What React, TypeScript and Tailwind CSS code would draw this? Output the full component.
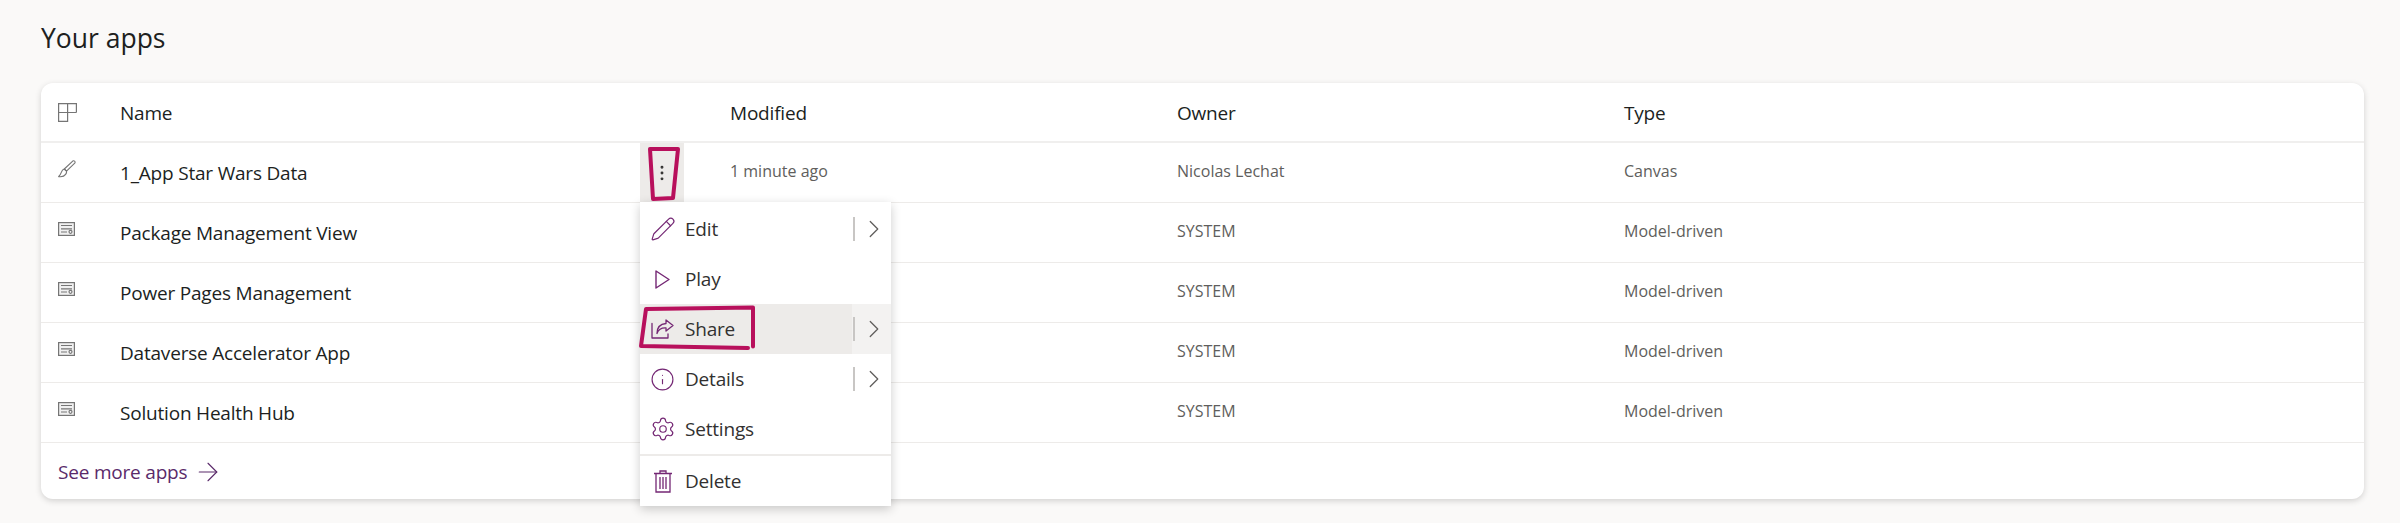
import { ArrowRight, ChevronRight, Info, Pencil, Settings, MoreVertical } from "lucide-react";
import type { ReactNode } from "react";

const APPS = [
  { name: "1_App Star Wars Data", modified: "1 minute ago", owner: "Nicolas Lechat", type: "Canvas", canvas: true },
  { name: "Package Management View", modified: "", owner: "SYSTEM", type: "Model-driven", canvas: false },
  { name: "Power Pages Management", modified: "", owner: "SYSTEM", type: "Model-driven", canvas: false },
  { name: "Dataverse Accelerator App", modified: "", owner: "SYSTEM", type: "Model-driven", canvas: false },
  { name: "Solution Health Hub", modified: "", owner: "SYSTEM", type: "Model-driven", canvas: false },
];

const COLS = "grid grid-cols-[79px_610px_447px_447px_1fr] items-center";

const GridIcon = () => (
  <svg width="19" height="19" viewBox="0 0 19 19" fill="none" stroke="#757575" strokeWidth="1.2">
    <path d="M.6 .6h9v17.8h-9zM.6 9.500h17.800M9.600 .6h8.800v8.900" />
  </svg>
);

const BrushIcon = () => (
  <svg width="18" height="18" viewBox="0 0 18 18" fill="none" stroke="#757575" strokeWidth="1.1" strokeLinejoin="round">
    <path d="M15 .8c1.200-.4 2.400.8 2 2L8.500 11.200 6.300 9z" />
    <path d="M6.300 9C4.500 9.600 3.800 10.800 3.300 12.300 2.800 13.800 1.800 15.200.6 16.600c2.800.4 5.800-.4 7-2.200.8-1 1.100-2.100.9-3.200z" />
  </svg>
);

const ModelIcon = () => (
  <svg width="17" height="14" viewBox="0 0 17 14" fill="none" stroke="#757575" strokeWidth="1.2">
    <rect x=".6" y=".6" width="15.800" height="12.800" fill="#f0f0f0" />
    <path d="M3 3.500h11M3 6.800h11M3 10h6" />
    <circle cx="12.500" cy="9.800" r="1.500" fill="#fff" />
  </svg>
);

const PlayIcon = () => (
  <svg width="15" height="19" viewBox="0 0 15 19" fill="none" stroke="currentColor" strokeWidth="1.4" strokeLinejoin="round">
    <path d="M1 1l13 8.500L1 18z" />
  </svg>
);

const ShareIcon = () => (
  <svg width="23" height="20" viewBox="0 0 23 20" fill="none" stroke="currentColor" strokeWidth="1.300" strokeLinejoin="round" strokeLinecap="round">
    <path d="M1 4.500V19h16v-4" />
    <path d="M15 1l7 5.500-7 5.500V9C10.500 8.700 7.500 10.500 6 14.500 6 9 9 5 15 4.500z" />
  </svg>
);

const TrashIcon = () => (
  <svg width="18" height="23" viewBox="0 0 18 23" fill="none" stroke="currentColor" strokeWidth="1.300">
    <path d="M0 3.500h18M6 3.500V1h6v2.500M2 3.500V22h14V3.500M6 7v12M9 7v12M12 7v12" />
  </svg>
);

function MenuItem({ icon, label, more, active }: { icon: ReactNode; label: string; more?: boolean; active?: boolean }) {
  return (
    <div className={`flex h-[50px] items-center ${active ? "bg-[#edebe9]" : ""}`}>
      <span className="flex w-[45px] justify-center text-[#742774]">{icon}</span>
      <span className="flex-1 text-[19px] tracking-[-0.2px] text-[#323130]">{label}</span>
      {more && (
        <span className={`flex h-full w-[39px] items-center justify-center pr-[2px] ${active ? "bg-[#f3f2f1]" : ""}`}>
          <span className="flex h-[24px] items-center border-l-2 border-[#c8c6c4] pl-[4px]">
            <ChevronRight size={30} strokeWidth={1} className="text-[#605e5c]" />
          </span>
        </span>
      )}
    </div>
  );
}

export default function App() {
  return (
    <div className="relative h-[523px] overflow-hidden bg-[#faf9f8] pl-[41px] pr-[36px] font-['Open_Sans',sans-serif]">
      <h1 className="flex h-[83px] items-start pt-[19px] text-[26.500px] leading-[38px] font-medium text-[#201f1e]">Your apps</h1>

      <div className="relative h-[416px] rounded-[12px] bg-white shadow-[0_2px_6px_rgba(0,0,0,0.16)]">
        <div className={`${COLS} h-[60px] border-b-2 border-[#f0efee] pt-[2px] text-[19px] tracking-[-0.2px] font-medium text-[#201f1e]`}>
          <span className="flex justify-start pb-[2px] pl-[17px]"><GridIcon /></span>
          <span>Name</span>
          <span>Modified</span>
          <span>Owner</span>
          <span>Type</span>
        </div>

        {APPS.map((app) => (
          <div key={app.name} className={`${COLS} h-[60px] border-b border-[#edebe9]`}>
            <span className="flex justify-start pb-[8px] pl-[17px]">{app.canvas ? <BrushIcon /> : <ModelIcon />}</span>
            <span className="pt-[1px] text-[19px] tracking-[-0.2px] text-[#201f1e]">{app.name}</span>
            <span className="pb-[3px] text-[16px] text-[#605e5c]">{app.modified}</span>
            <span className="pb-[3px] text-[16px] text-[#605e5c]">{app.owner}</span>
            <span className="pb-[3px] text-[16px] text-[#605e5c]">{app.type}</span>
          </div>
        ))}

        <div className="flex h-[58px] items-center gap-[6px] pl-[17px] text-[19px] tracking-[-0.2px] text-[#5a2a6a]">
          See more apps
          <ArrowRight size={30} strokeWidth={0.9} />
        </div>

        {/* more button, sits over the name column */}
        <div className="absolute top-[60px] left-[599px] flex h-[59px] w-[44px] items-center justify-center bg-[#edebe9] text-[#323130]">
          <MoreVertical size={20} strokeWidth={1.5} />
        </div>

        {/* context menu */}
        <div className="absolute top-[119px] left-[599px] w-[251px] bg-white pt-[2px] shadow-[0_3px_10px_rgba(0,0,0,0.2)]">
          <MenuItem icon={<Pencil size={26} strokeWidth={1.1} />} label="Edit" more />
          <MenuItem icon={<PlayIcon />} label="Play" />
          <MenuItem icon={<ShareIcon />} label="Share" more active />
          <MenuItem icon={<Info size={25} strokeWidth={1.1} />} label="Details" more />
          <MenuItem icon={<Settings size={26} strokeWidth={1.1} />} label="Settings" />
          <div className="h-[2px] bg-[#edebe9]" />
          <MenuItem icon={<TrashIcon />} label="Delete" />
        </div>
      </div>

      {/* hand drawn highlights from the screenshot */}
      <svg className="absolute top-0 left-0" width="2400" height="523" fill="none" stroke="#b8105c" strokeWidth="4" strokeLinejoin="round" strokeLinecap="round">
        <path d="M650 149h28l-5 49-20 1z" />
        <path d="M641 346l5-37 107-1.500v39M641 346l107 2" />
      </svg>
    </div>
  );
}
